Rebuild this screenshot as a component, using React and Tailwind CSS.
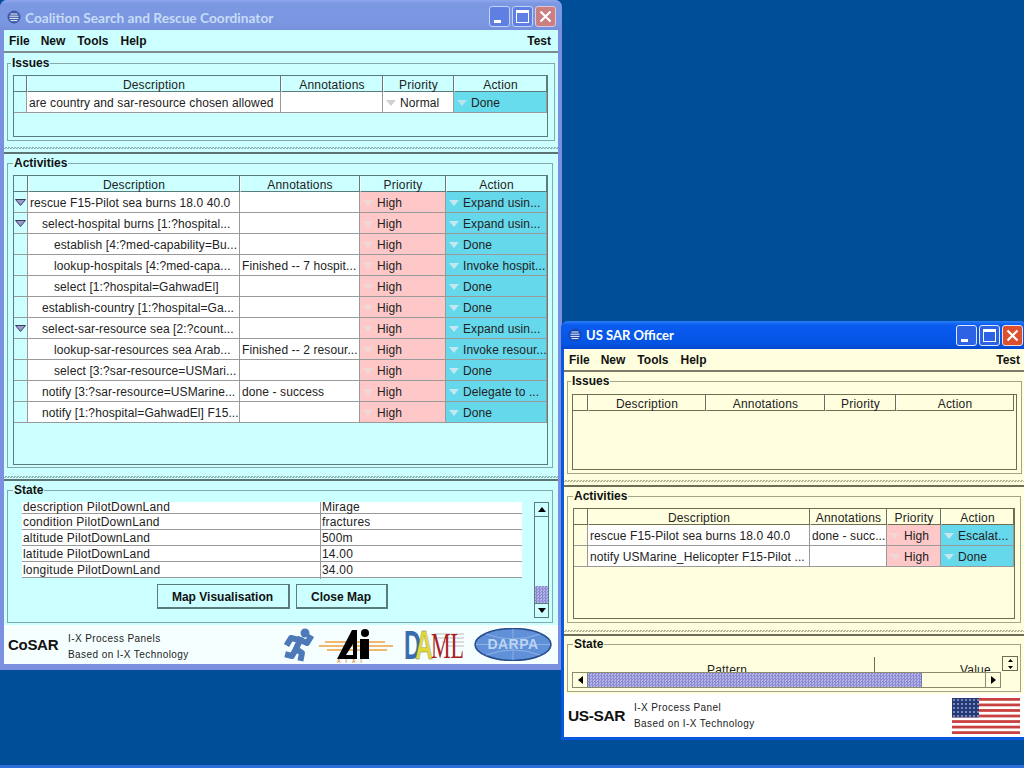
const font = "[font-family:'Liberation_Sans',Arial,sans-serif]";

const coalitionRows = [
  { d: "rescue F15-Pilot sea burns 18.0 40.0", lvl: 0, open: true, a: "", act: "Expand usin..." },
  { d: "select-hospital burns [1:?hospital...", lvl: 1, open: true, a: "", act: "Expand usin..." },
  { d: "establish [4:?med-capability=Bu...", lvl: 2, a: "", act: "Done" },
  { d: "lookup-hospitals [4:?med-capa...", lvl: 2, a: "Finished -- 7 hospit...", act: "Invoke hospit..." },
  { d: "select [1:?hospital=GahwadEl]", lvl: 2, a: "", act: "Done" },
  { d: "establish-country [1:?hospital=Ga...", lvl: 1, a: "", act: "Done" },
  { d: "select-sar-resource sea [2:?count...", lvl: 1, open: true, a: "", act: "Expand usin..." },
  { d: "lookup-sar-resources sea Arab...", lvl: 2, a: "Finished -- 2 resour...", act: "Invoke resour..." },
  { d: "select [3:?sar-resource=USMari...", lvl: 2, a: "", act: "Done" },
  { d: "notify [3:?sar-resource=USMarine...", lvl: 1, a: "done - success", act: "Delegate to ..." },
  { d: "notify [1:?hospital=GahwadEl] F15...", lvl: 1, a: "", act: "Done" },
];

const stateRows = [
  ["condition PilotDownLand", "fractures"],
  ["altitude PilotDownLand", "500m"],
  ["latitude PilotDownLand", "14.00"],
  ["longitude PilotDownLand", "34.00"],
];

const heads = ["Description", "Annotations", "Priority", "Action"];

function Tri({ fill = "#d4d4d4", className = "" }) {
  return (
    <svg width="10" height="6" viewBox="0 0 10 6" className={`shrink-0 ${className}`}>
      <path d="M0 0H10L5 6Z" fill={fill} />
    </svg>
  );
}

function Expander() {
  return (
    <svg width="11" height="7" viewBox="0 0 11 7" className="mx-auto">
      <path d="M.5.5H10.5L5.5 6.5Z" fill="#9a9ad0" stroke="#3c3c5c" strokeWidth="1" />
    </svg>
  );
}

function TitleBar({ icon, title, textClass, barClass, btnClass, closeClass }) {
  return (
    <div className={`flex items-center shrink-0 rounded-t-[7px] ${barClass}`}>
      <svg width="14" height="14" viewBox="0 0 14 14" className="ml-[7px] shrink-0">
        <circle cx="7" cy="7" r="6.5" fill={icon} />
        <path d="M3.5 4H10.5M2.5 6.2H11.5M2.5 8.4H11.5M3.5 10.6H10.5" stroke="#eef4ff" strokeWidth="1" />
      </svg>
      <span className={`ml-[4px] font-bold leading-none ${textClass} [font-family:'Lato',sans-serif]`}>{title}</span>
      <div className="ml-auto flex gap-[2px]">
        <div className={`relative size-[21px] rounded-[3px] border ${btnClass}`}>
          <div className="absolute left-[4px] bottom-[3px] h-[3px] w-[7px] bg-white" />
        </div>
        <div className={`relative size-[21px] rounded-[3px] border ${btnClass}`}>
          <div className="absolute left-[3px] top-[3px] size-[13px] border border-t-[3px] border-white" />
        </div>
        <div className={`flex size-[21px] items-center justify-center rounded-[3px] border ${closeClass}`}>
          <svg width="13" height="13" viewBox="0 0 13 13">
            <path d="M1.5 1.5L11.5 11.5M11.5 1.5L1.5 11.5" stroke="#fff" strokeWidth="2.2" />
          </svg>
        </div>
      </div>
    </div>
  );
}

function MenuBar({ className }) {
  return (
    <div className={`flex h-[23px] shrink-0 items-center border-b-2 pl-[5px] pr-[7px] pt-px text-[12px] font-bold text-[#111] ${className}`}>
      <div className="flex gap-[12px]">
        <span>File</span>
        <span className="-ml-px">New</span>
        <span>Tools</span>
        <span>Help</span>
      </div>
      <span className="ml-auto">Test</span>
    </div>
  );
}

function Group({ title, className, legendClass, children }) {
  return (
    <fieldset className={`shrink-0 border ${className}`}>
      <legend className={`px-px text-[12px] font-bold leading-[14px] text-[#111] ${legendClass}`}>{title}</legend>
      {children}
    </fieldset>
  );
}

function Splitter({ dots, className }) {
  return <div className={`h-[2px] shrink-0 bg-[length:3px_2px] ${dots} ${className}`} />;
}

function HeaderRow({ cols, line }) {
  return (
    <div className={`grid h-[16px] ${cols}`}>
      <div className={`border-b border-r ${line}`} />
      {heads.map((h) => (
        <div key={h} className={`flex items-center justify-center border-b border-r border-l border-l-white pt-[2px] text-[12px] leading-none tracking-[0.2px] text-[#222] ${line}`}>
          {h}
        </div>
      ))}
    </div>
  );
}

function Cell({ className = "", children }) {
  return (
    <div className={`flex items-center overflow-hidden whitespace-nowrap border-b border-r border-[#9a9a9a] pt-px text-[12px] leading-none tracking-[0.1px] text-[#222] ${className}`}>
      {children}
    </div>
  );
}

function DropCell({ text, className, tri }) {
  return (
    <Cell className={className}>
      <Tri fill={tri} className="ml-[3px] mr-[4px]" />
      {text}
    </Cell>
  );
}

function CoalitionWindow() {
  const line = "border-[#5c7c7c]";
  const dots = "bg-[repeating-conic-gradient(#8fb4b4_0_25%,transparent_0_50%)]";
  const issueCols = "grid-cols-[13px_254px_102px_71px_93px]";
  const activityCols = "grid-cols-[14px_212px_120px_86px_101px]";
  return (
    <div className="absolute left-0 top-0 flex h-[670px] w-[562px] flex-col rounded-t-[7px] bg-[#7b90e0]">
      <TitleBar
        icon="#3d5aa8"
        title="Coalition Search and Rescue Coordinator"
        textClass="text-[13.7px] text-[#c6dcf6] pt-[3px]"
        barClass="h-[30px] pr-[6px] pt-[3px] bg-[linear-gradient(180deg,#8ea6ee_0,#7c98e2_12%,#7b96e0_80%,#7490da)]"
        btnClass="border-[#c5d3f8] bg-[#5f80e2]"
        closeClass="border-[#dcc8d8] bg-[#cb7f80]"
      />
      <div className={`mx-[4px] flex w-[554px] flex-col bg-[#ccffff] ${font}`}>
        <MenuBar className="border-[#7c8c8c]" />
        <Group title="Issues" legendClass="ml-[3px]" className="ml-[3px] mt-[3px] h-[85px] w-[548px] border-[#86a8a8]">
          <div className={`ml-[5px] mt-[5px] h-[62px] w-[535px] border ${line}`}>
            <HeaderRow cols={issueCols} line={line} />
            <div className={`grid h-[21px] ${issueCols}`}>
              <Cell />
              <Cell className="bg-white pl-[2px]">are country and sar-resource chosen allowed</Cell>
              <Cell className="bg-white" />
              <DropCell text="Normal" className="bg-white" tri="#d0d0d0" />
              <DropCell text="Done" className="bg-[#66dced]" tri="#b4e4ee" />
            </div>
          </div>
        </Group>
        <Splitter dots={dots} className="mt-[6px]" />
        <div className="mt-[3px] h-[2px] shrink-0 bg-[#5c7474]" />
        <Group title="Activities" legendClass="ml-[5px]" className="ml-[3px] mt-[2px] h-[312px] w-[546px] border-[#86a8a8]">
          <div className={`ml-[5px] mt-[5px] h-[290px] w-[535px] border ${line}`}>
            <HeaderRow cols={activityCols} line={line} />
            {coalitionRows.map((r) => (
              <div key={r.d} className={`grid h-[21px] ${activityCols}`}>
                <Cell className="justify-center">{r.open && <Expander />}</Cell>
                <Cell className="bg-white pl-[2px]">
                  {r.lvl === 1 && <span className="w-[12px] shrink-0" />}
                  {r.lvl === 2 && <span className="w-[24px] shrink-0" />}
                  {r.d}
                </Cell>
                <Cell className="bg-white pl-[2px]">{r.a}</Cell>
                <DropCell text="High" className="bg-[#ffc8c8]" tri="#f0d8d8" />
                <DropCell text={r.act} className="bg-[#66d8ec]" tri="#c4e8f0" />
              </div>
            ))}
          </div>
        </Group>
        <Splitter dots={dots} className="mt-[8px]" />
        <div className="mt-px h-[2px] shrink-0 bg-[#5c7474]" />
        <Group title="State" legendClass="ml-[5px]" className="ml-[3px] mt-[2px] h-[140px] w-[546px] border-[#86a8a8]">
          <div className="flex">
            <div className="ml-[14px] w-[500px]">
              <div className="mt-[5px] grid h-[12px] grid-cols-[299px_201px] border-b border-[#999] bg-white text-[12px] leading-[11px] tracking-[0.2px] text-[#222]">
                <div className="border-r border-[#999] pl-px">description PilotDownLand</div>
                <div className="pl-px">Mirage</div>
              </div>
              {stateRows.map((r) => (
                <div key={r[0]} className="grid h-[16px] grid-cols-[299px_201px] border-b border-[#999] bg-white text-[12px] leading-[17px] tracking-[0.2px] text-[#222]">
                  <div className="border-r border-[#999] pl-px">{r[0]}</div>
                  <div className="pl-px">{r[1]}</div>
                </div>
              ))}
              <div className="mt-[6px] flex justify-center gap-[6px] text-[12px] font-bold text-[#111]">
                <button className="h-[25px] w-[133px] border border-b-2 border-r-2 border-[#5c7c7c] bg-[#ccffff] pt-px">Map Visualisation</button>
                <button className="h-[25px] w-[92px] border border-b-2 border-r-2 border-[#5c7c7c] bg-[#ccffff] pt-px">Close Map</button>
              </div>
            </div>
            <div className="ml-[12px] mt-[5px] flex h-[116px] w-[15px] flex-col border border-[#5c7c7c]">
              <div className="flex h-[14px] items-center justify-center border-b border-[#5c7c7c]">
                <svg width="8" height="5" viewBox="0 0 8 5"><path d="M0 5H8L4 0Z" fill="#000" /></svg>
              </div>
              <div className="flex-1" />
              <div className="h-[17px] bg-[#9c9cdc] bg-[repeating-conic-gradient(#8a8ad0_0_25%,#b4b4e8_0_50%)] bg-[length:3px_3px]" />
              <div className="flex h-[14px] items-center justify-center border-t border-[#5c7c7c]">
                <svg width="8" height="5" viewBox="0 0 8 5"><path d="M0 0H8L4 5Z" fill="#000" /></svg>
              </div>
            </div>
          </div>
        </Group>
        <div className="mt-[2px] flex h-[39px] shrink-0 items-center bg-[#f6ffff] pl-[4px] pr-[6px]">
          <span className="w-[60px] text-[15px] font-bold leading-none tracking-[-0.3px] text-[#111]">CoSAR</span>
          <div className="mt-[4px] text-[10px] leading-[16px] tracking-[0.42px] text-[#222]">
            <div>I-X Process Panels</div>
            <div>Based on I-X Technology</div>
          </div>
          <div className="ml-auto flex items-center">
            <svg width="30" height="34" viewBox="0 0 30 34" className="shrink-0">
              <g fill="none" stroke="#4d79b8" strokeWidth="6" strokeLinecap="square" strokeLinejoin="round">
                <path d="M16 12L12 21L18 25L17 30" />
                <path d="M12 21L8 28L4 27" />
                <path d="M16 12L7 10L4 15" />
                <path d="M16 12L23 15L26 10" />
              </g>
              <circle cx="21" cy="5" r="4.5" fill="#4d79b8" />
            </svg>
            <svg width="78" height="36" viewBox="0 0 78 36" className="ml-[3px] shrink-0">
              <g stroke="#f0a040" strokeWidth="1.5">
                <path d="M2 19H76M8 15H68M10 23H70" />
              </g>
              <path fillRule="evenodd" d="M35 3L20 32H40V3ZM36 17L29 28H36Z" fill="#000" />
              <rect x="43" y="12" width="9" height="20" fill="#000" />
              <circle cx="48" cy="6" r="4" fill="#000" />
              <text x="20" y="36" fontSize="5" fill="#e08a30" letterSpacing="5" fontFamily="Liberation Sans" fontWeight="bold">AIAI</text>
            </svg>
            <svg width="60" height="30" viewBox="0 0 60 30" className="ml-[9px] shrink-0">
              <g fill="#dcdcdc">
                <rect x="30" y="3" width="30" height="2" />
                <rect x="34" y="7" width="26" height="2" />
                <rect x="38" y="11" width="22" height="2" />
                <rect x="44" y="15" width="16" height="2" />
              </g>
              <text x="0" y="29" fontSize="40" fontWeight="bold" fill="#3a6cb0" fontFamily="Liberation Sans" textLength="17" lengthAdjust="spacingAndGlyphs">D</text>
              <text x="11" y="29" fontSize="40" fontWeight="bold" fill="#e2d838" stroke="#777" strokeWidth="0.4" fontFamily="Liberation Sans" textLength="18" lengthAdjust="spacingAndGlyphs">A</text>
              <text x="27" y="28" fontSize="36" fill="#a82020" fontFamily="Liberation Serif" textLength="33" lengthAdjust="spacingAndGlyphs">ML</text>
            </svg>
            <svg width="78" height="33" viewBox="0 0 78 33" className="ml-[10px] shrink-0">
              <ellipse cx="39" cy="16.5" rx="38" ry="16" fill="#5f90d8" stroke="#264a8c" strokeWidth="1.5" />
              <path d="M2 16.5H76M39 1V32M12 6Q39 16 66 6M12 27Q39 17 66 27" fill="none" stroke="#a5c0e8" strokeWidth="0.7" />
              <text x="39" y="21" textAnchor="middle" fontSize="14" fontWeight="bold" fill="#bcd4f4" fontFamily="Liberation Sans" letterSpacing="0.5">DARPA</text>
            </svg>
          </div>
        </div>
      </div>
    </div>
  );
}

function OfficerWindow() {
  const line = "border-[#6e6e50]";
  const dots = "bg-[repeating-conic-gradient(#b8b898_0_25%,transparent_0_50%)]";
  const issueCols = "grid-cols-[15px_118px_119px_71px_118px]";
  const activityCols = "grid-cols-[14px_222px_77px_54px_73px]";
  return (
    <div className="absolute left-[561px] top-[321px] flex h-[419px] w-[466px] flex-col rounded-t-[7px] bg-[#0a58e0]">
      <TitleBar
        icon="#1846b0"
        title="US SAR Officer"
        textClass="text-[13px] text-white pt-px"
        barClass="h-[28px] pr-[4px] bg-[linear-gradient(180deg,#2a80f8_0,#0a5cf0_14%,#0454e4_80%,#0348d0)]"
        btnClass="border-[#e0e8ff] bg-[#2c62e4]"
        closeClass="border-[#f0e0d8] bg-[#dc5030]"
      />
      <div className={`ml-[3px] flex w-[463px] flex-col bg-[#ffffe0] ${font}`}>
        <MenuBar className="border-[#7c7c68]" />
        <Group title="Issues" legendClass="ml-[3px]" className="ml-[3px] mt-[2px] h-[100px] w-[455px] border-[#a4a488]">
          <div className={`ml-[4px] mt-[6px] h-[76px] w-[445px] border ${line}`}>
            <HeaderRow cols={issueCols} line={line} />
          </div>
        </Group>
        <Splitter dots={dots} className="mt-[6px]" />
        <div className="mt-[3px] h-[2px] shrink-0 bg-[#6e6e58]" />
        <Group title="Activities" legendClass="ml-[5px]" className="ml-[3px] mt-[2px] h-[134px] w-[454px] border-[#a4a488]">
          <div className={`ml-[5px] mt-[5px] h-[111px] w-[442px] border ${line}`}>
            <HeaderRow cols={activityCols} line={line} />
            <div className={`grid h-[21px] ${activityCols}`}>
              <Cell />
              <Cell className="bg-white pl-[2px]">rescue F15-Pilot sea burns 18.0 40.0</Cell>
              <Cell className="bg-white pl-[2px]">done - succ...</Cell>
              <DropCell text="High" className="bg-[#ffc8c8]" tri="#f0d8d8" />
              <DropCell text="Escalat..." className="bg-[#66d8ec]" tri="#c4e8f0" />
            </div>
            <div className={`grid h-[21px] ${activityCols}`}>
              <Cell />
              <Cell className="bg-white pl-[2px]">notify USMarine_Helicopter F15-Pilot ...</Cell>
              <Cell className="bg-white" />
              <DropCell text="High" className="bg-[#ffc8c8]" tri="#f0d8d8" />
              <DropCell text="Done" className="bg-[#66d8ec]" tri="#c4e8f0" />
            </div>
          </div>
        </Group>
        <Splitter dots={dots} className="mt-[7px]" />
        <div className="mt-[2px] h-[2px] shrink-0 bg-[#6e6e58]" />
        <Group title="State" legendClass="ml-[5px]" className="ml-[3px] mt-px h-[55px] w-[454px] border-[#a4a488]">
          <div className="flex">
            <div className="ml-[4px] w-[429px]">
              <div className="relative mt-[6px] h-[15px] overflow-hidden text-[12px] leading-[26px] tracking-[0.2px] text-[#222]">
                <span className="absolute left-[135px] top-0">Pattern</span>
                <div className="absolute left-[302px] top-0 h-full w-px bg-[#6e6e50]" />
                <span className="absolute left-[388px] top-0">Value</span>
              </div>
              <div className="flex h-[16px] border border-[#8a8a70]">
                <div className="flex w-[14px] items-center justify-center">
                  <svg width="5" height="8" viewBox="0 0 5 8"><path d="M5 0V8L0 4Z" fill="#000" /></svg>
                </div>
                <div className="w-[335px] border-x border-[#7a7aa8] bg-[#9c9cdc] bg-[repeating-conic-gradient(#8a8ad0_0_25%,#b4b4e8_0_50%)] bg-[length:3px_3px]" />
                <div className="flex-1" />
                <div className="flex w-[15px] items-center justify-center border-l border-[#8a8a70]">
                  <svg width="5" height="8" viewBox="0 0 5 8"><path d="M0 0V8L5 4Z" fill="#000" /></svg>
                </div>
              </div>
            </div>
            <div className="ml-[1px] mt-[5px] h-[15px] w-[16px]">
              <div className="flex h-full flex-col items-center justify-center gap-[4px] border border-[#6e6e50]">
                <svg width="5" height="3" viewBox="0 0 5 3"><path d="M0 3H5L2.5 0Z" fill="#000" /></svg>
                <svg width="5" height="3" viewBox="0 0 5 3"><path d="M0 0H5L2.5 3Z" fill="#000" /></svg>
              </div>
            </div>
          </div>
        </Group>
        <div className="mt-[2px] flex h-[43px] shrink-0 items-center bg-white pl-[4px] pr-[7px]">
          <span className="w-[66px] text-[15.5px] font-bold leading-none tracking-[-0.4px] text-[#111]">US-SAR</span>
          <div className="text-[10px] leading-[16px] tracking-[0.42px] text-[#222]">
            <div>I-X Process Panel</div>
            <div>Based on I-X Technology</div>
          </div>
          <svg width="68" height="36" viewBox="0 0 68 36" className="ml-auto shrink-0">
            <rect width="68" height="36" fill="#fff" />
            {[0, 1, 2, 3, 4, 5, 6].map((i) => (
              <rect key={i} y={(i * 36) / 6.5} width="68" height="2.77" fill="#c84040" />
            ))}
            <rect width="27" height="19.4" fill="#243a78" />
            {[2, 6, 10, 14, 18].map((y) =>
              [2, 6, 10, 14, 18, 22, 26].map((x) => <circle key={`${x}-${y}`} cx={x} cy={y} r="0.8" fill="#e8ecff" />)
            )}
          </svg>
        </div>
      </div>
    </div>
  );
}

export default function App() {
  return (
    <div className="relative h-[768px] w-[1024px] overflow-hidden bg-[#004e98]">
      <CoalitionWindow />
      <OfficerWindow />
      <div className="absolute bottom-0 left-0 h-[3px] w-full bg-[#2a70d8]" />
    </div>
  );
}
